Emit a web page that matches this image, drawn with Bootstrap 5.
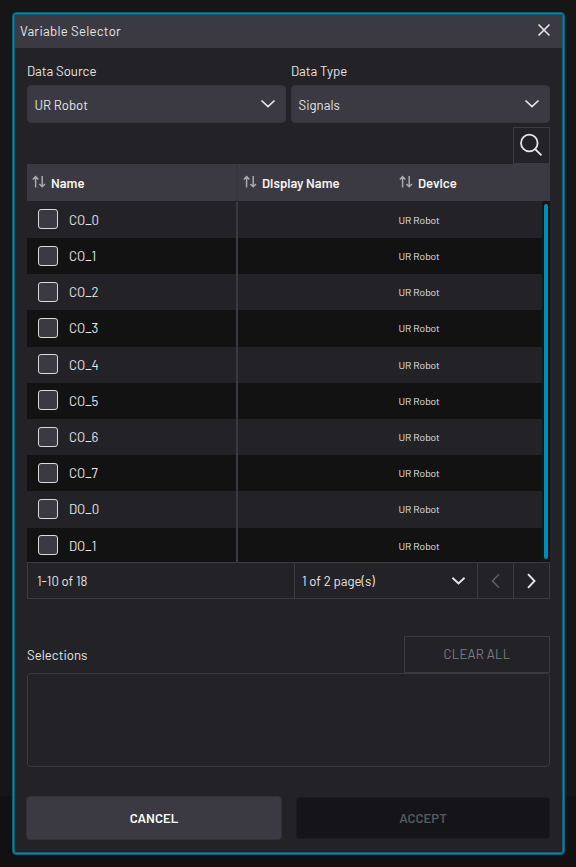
<!DOCTYPE html>
<html lang="en">
<head>
<meta charset="utf-8">
<meta name="viewport" content="width=device-width, initial-scale=1">
<title>Variable Selector</title>
<link href="https://cdn.jsdelivr.net/npm/bootstrap@5.3.0/dist/css/bootstrap.min.css" rel="stylesheet">
<style>
body{background:linear-gradient(#161617 796px,#111112 796px);height:867px;padding:12px 11px 12px 12px;overflow:hidden;font-family:Barlow,Roboto,"Liberation Sans",sans-serif;font-size:13.2px;font-weight:400;line-height:20px;color:#e6e6e7}
svg{display:block;fill:none;stroke:currentColor;flex:none}
.selector-dialog{height:843px;background:#232227;border:1px solid #075f79;border-radius:4px;box-shadow:inset 0 0 0 1px #0289b0,inset 0 0 0 2px #0b5d74;padding:2px}
.dialog-title{height:33px;background:#3b3941;padding:0 11px 0 5px;letter-spacing:.25px}
.dialog-title span{padding-bottom:2px}
.dialog-main{padding:0 12px}
.pickers{gap:5px;padding-top:13px}
.source-field,.type-field{width:259px}
.field-label{height:24px}
.picker{height:38px;background:#3b3941;border:1px solid #37353c;border-radius:4px;padding:0 9.5px 0 6.5px}
.picker span{padding-top:1px}
.search-line{margin-top:4px}
.search-btn{width:37px;height:37px;border:1px solid #3b3a40;padding:0 2px 2px 0}
.grid-head{height:37px;background:#3b3941;font-weight:600;font-size:13.1px;color:#f5f5f5}
.grid-head svg{color:#aaa9ad}
.sort-cell{padding-left:5px;gap:5px}
.sort-cell svg{margin-bottom:2px}
.device-head{padding-left:5px}
.col-name{width:209px;flex:none}
.col-display{width:158px;flex:none;border-left:2px solid #3b3941}
.grid-head .col-display{border-color:#37353d}
.grid-body{height:361px;overflow:hidden}
.grid-row{height:36.2px}
.grid-row:first-child{height:37px;padding-top:.7px}
.grid-row:nth-child(even){background:#121212}
.grid-row .col-name{padding-left:11px}
.checkbox-tile{width:20px;height:20px;border:1px solid #dadadb;border-radius:3px;background:#3b3941;margin:0 11px 1px 0}
.device-text{font-size:10.2px;padding-left:4.5px}
.scroll-track{width:8px;background:#151416;padding:3px 2px}
.scroll-thumb{width:4px;background:#028bb3;border-radius:2px;height:100%}
.pager{height:37px;border:1px solid #3d3c42}
.pager>*{border-left:1px solid #3d3c42}
.pager>:first-child{border-left:0;width:266px;padding-left:9px}
.page-picker{width:183px;padding:0 11.5px 0 7px}
.page-step{width:36px}
.selection-line{margin-top:37px}
.clear-btn{width:146px;height:37px;border:1px solid #3b3a40;color:#7e7d81;letter-spacing:.18px;padding-bottom:1px}
.selection-box{height:94px;border:1px solid #3b3a40;border-radius:4px}
.actions{margin:29px 0 0 -1px}
.action{height:44px;width:256px;border-radius:4px;font-weight:600;background:#3b3941;border:1px solid #323138;color:#fff}
.action-off{width:254px;height:42px;background:#151419;border-color:#1b1a1f;color:#58575b}
</style>
</head>
<body>
<main class="selector-dialog">
  <header class="dialog-title d-flex align-items-center justify-content-between">
    <span>Variable Selector</span>
    <svg width="14" height="14" viewBox="0 0 14 14" stroke-width="1.6" class="mb-1"><path d="M1.5 1.5l11 11M12.5 1.5l-11 11"/></svg>
  </header>
  <section class="dialog-main">
    <div class="d-flex pickers">
      <div class="source-field"><div class="field-label">Data Source</div>
        <div class="picker d-flex align-items-center justify-content-between"><span>UR Robot</span><svg width="16" height="10" viewBox="0 0 16 10" stroke-width="1.7"><path d="M1.5 1.5l6.5 6.2 6.5-6.2"/></svg></div></div>
      <div class="type-field"><div class="field-label">Data Type</div>
        <div class="picker d-flex align-items-center justify-content-between"><span>Signals</span><svg width="16" height="10" viewBox="0 0 16 10" stroke-width="1.7"><path d="M1.5 1.5l6.5 6.2 6.5-6.2"/></svg></div></div>
    </div>
    <div class="d-flex justify-content-end search-line"><div class="search-btn d-flex align-items-center justify-content-center"><svg width="24" height="24" viewBox="0 0 24 24" stroke-width="1.8"><circle cx="10.3" cy="10" r="8.3"/><path d="M16 16l6.5 6.3"/></svg></div></div>
    <div class="grid-head d-flex align-items-stretch">
      <div class="col-name d-flex align-items-center sort-cell"><svg width="14" height="14" viewBox="0 0 14 14" stroke-width="1.5"><path d="M3.6 12.5V2M.8 4.6L3.6 1.7l2.8 2.9M10.2 1v10.5M7.4 9l2.8 2.8L13 9"/></svg><span>Name</span></div>
      <div class="col-display d-flex align-items-center sort-cell"><svg width="14" height="14" viewBox="0 0 14 14" stroke-width="1.5"><path d="M3.6 12.5V2M.8 4.6L3.6 1.7l2.8 2.9M10.2 1v10.5M7.4 9l2.8 2.8L13 9"/></svg><span>Display Name</span></div>
      <div class="d-flex align-items-center sort-cell device-head"><svg width="14" height="14" viewBox="0 0 14 14" stroke-width="1.5"><path d="M3.6 12.5V2M.8 4.6L3.6 1.7l2.8 2.9M10.2 1v10.5M7.4 9l2.8 2.8L13 9"/></svg><span>Device</span></div>
    </div>
    <div class="grid-body d-flex">
      <div class="flex-grow-1" id="rows"></div>
      <div class="scroll-track"><div class="scroll-thumb"></div></div>
    </div>
    <div class="pager d-flex">
      <div class="d-flex align-items-center">1-10 of 18</div>
      <div class="page-picker d-flex align-items-center justify-content-between"><span>1 of 2 page(s)</span><svg width="15" height="10" viewBox="0 0 16 10" stroke-width="2"><path d="M1.5 1.5l6.5 6.2 6.5-6.2"/></svg></div>
      <div class="page-step d-flex align-items-center justify-content-center"><svg width="9" height="16" viewBox="0 0 9 16" stroke-width="1.5" class="text-secondary opacity-75"><path d="M8 1.2L1.5 8 8 14.8"/></svg></div>
      <div class="page-step d-flex align-items-center justify-content-center"><svg width="9" height="16" viewBox="0 0 9 16" stroke-width="1.9"><path d="M1 1.2L7.5 8 1 14.8"/></svg></div>
    </div>
    <div class="selection-line d-flex align-items-center justify-content-between"><span>Selections</span><div class="clear-btn d-flex align-items-center justify-content-center">CLEAR ALL</div></div>
    <div class="selection-box"></div>
    <div class="actions d-flex align-items-center justify-content-between"><div class="action d-flex align-items-center justify-content-center">CANCEL</div><div class="action action-off d-flex align-items-center justify-content-center">ACCEPT</div></div>
  </section>
</main>
<script>
document.getElementById('rows').innerHTML=['CO_0','CO_1','CO_2','CO_3','CO_4','CO_5','CO_6','CO_7','DO_0','DO_1'].map(n=>`<div class="grid-row d-flex align-items-stretch"><div class="col-name d-flex align-items-center"><span class="checkbox-tile"></span><span>${n}</span></div><div class="col-display"></div><div class="device-text d-flex align-items-center">UR Robot</div></div>`).join('');
</script>
<script src="https://cdn.jsdelivr.net/npm/bootstrap@5.3.0/dist/js/bootstrap.bundle.min.js"></script>
</body>
</html>
